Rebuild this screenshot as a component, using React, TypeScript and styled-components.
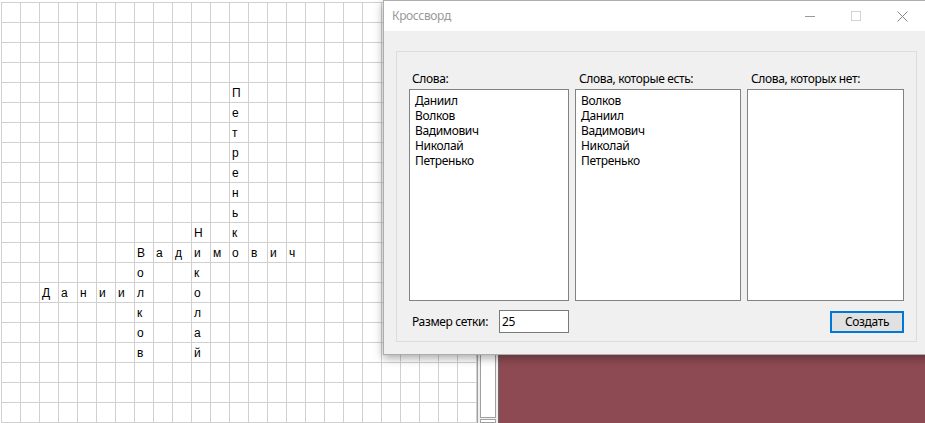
import React from "react";
import styled, { createGlobalStyle } from "styled-components";

const GlobalStyle = createGlobalStyle`
  html, body { margin: 0; padding: 0; overflow: hidden; background: #8e4a52; }
  #root { width: 925px; height: 423px; }
`;

const SIZE = 25;
type Placement = { word: string; row: number; col: number; dir: "h" | "v" };
const placements: Placement[] = [
  { word: "Петренько", row: 4, col: 12, dir: "v" },
  { word: "Николай", row: 11, col: 10, dir: "v" },
  { word: "Вадимович", row: 12, col: 7, dir: "h" },
  { word: "Волков", row: 12, col: 7, dir: "v" },
  { word: "Даниил", row: 14, col: 2, dir: "h" },
];

function buildGrid(): string[][] {
  const g: string[][] = Array.from({ length: SIZE }, () => Array(SIZE).fill(""));
  placements.forEach((p) => {
    [...p.word].forEach((ch, i) => {
      const r = p.dir === "v" ? p.row + i : p.row;
      const c = p.dir === "h" ? p.col + i : p.col;
      g[r][c] = ch;
    });
  });
  return g;
}

const allWords = ["Даниил", "Волков", "Вадимович", "Николай", "Петренько"];
const presentWords = ["Волков", "Даниил", "Вадимович", "Николай", "Петренько"];
const missingWords: string[] = [];

const Desktop = styled.div`
  position: relative;
  width: 925px;
  height: 423px;
  overflow: hidden;
  display: flex;
  background: #8e4a52;
`;

const HostApp = styled.div`
  flex: none;
  width: 499px;
  height: 100%;
  box-sizing: border-box;
  display: flex;
  gap: 2px;
  background: #f0f0f0;
  border-right: 1px solid #6b6b6b;
`;

const GridPane = styled.div`
  flex: none;
  width: 478px;
  height: 100%;
  box-sizing: border-box;
  background: #ffffff;
  border-right: 1px solid #a0a0a0;
  padding: 2px 0 0 1px;
  overflow: hidden;
`;

const Grid = styled.div`
  display: grid;
  grid-template-columns: repeat(${SIZE}, 19px);
  grid-auto-rows: 20px;
  width: max-content;
  border-left: 1px solid #d0d0d0;
  border-top: 1px solid #d0d0d0;
`;

const Cell = styled.div`
  box-sizing: border-box;
  border-right: 1px solid #d0d0d0;
  border-bottom: 1px solid #d0d0d0;
  padding: 1px 0 0 2px;
  font-family: "Liberation Sans", Arial, sans-serif;
  font-size: 12px;
  line-height: 18px;
  color: #000;
`;

const ScrollColumn = styled.div`
  flex: none;
  width: 16px;
  display: flex;
  flex-direction: column;
  gap: 1px;
`;

const ScrollPiece = styled.div<{ $h?: number }>`
  box-sizing: border-box;
  height: ${(p) => (p.$h ? `${p.$h}px` : "auto")};
  flex: ${(p) => (p.$h ? "none" : "1")};
  background: #ffffff;
  border: 1px solid #a0a0a0;
`;

const Window = styled.div`
  position: absolute;
  left: 383px;
  top: 0;
  width: 547px;
  height: 355px;
  box-sizing: border-box;
  border: 1px solid rgba(0, 0, 0, 0.28);
  background: #f0f0f0;
  box-shadow: 0 3px 9px rgba(0, 0, 0, 0.35);
  display: flex;
  flex-direction: column;
  font-family: "Segoe UI", "Noto Sans", "Open Sans", sans-serif;
  font-size: 12px;
  letter-spacing: -0.35px;
  color: #000;
`;

const TitleBar = styled.div`
  flex: none;
  height: 30px;
  background: #ffffff;
  display: flex;
  align-items: center;
  padding: 0 4px 0 8px;
`;

const Title = styled.div`
  flex: 1;
  color: #999999;
  font-size: 12px;
  line-height: 16px;
`;

const CaptionButton = styled.div`
  width: 46px;
  height: 30px;
  display: flex;
  align-items: center;
  justify-content: center;
`;

const Client = styled.div`
  flex: 1;
  padding: 20px 12px 13px 12px;
`;

const GroupBox = styled.div`
  width: 521px;
  height: 291px;
  box-sizing: border-box;
  border: 1px solid #dcdcdc;
  padding: 19px 12px 0 12px;
  display: flex;
  flex-direction: column;
`;

const Columns = styled.div`
  display: grid;
  grid-template-columns: 160px 166px 157px;
  column-gap: 6px;
`;

const Column = styled.div`
  display: flex;
  flex-direction: column;
`;

const Label = styled.div<{ $indent?: number }>`
  height: 16px;
  line-height: 16px;
  margin-bottom: 2px;
  padding-left: ${(p) => p.$indent ?? 3}px;
  white-space: nowrap;
`;

const ListBox = styled.div`
  height: 212px;
  box-sizing: border-box;
  border: 1px solid #828282;
  background: #ffffff;
  padding: 3px 0 0 5px;
`;

const ListItem = styled.div`
  height: 15px;
  line-height: 15px;
  white-space: nowrap;
`;

const BottomRow = styled.div`
  margin-top: 9px;
  height: 23px;
  display: flex;
  align-items: center;
`;

const FieldLabel = styled.div`
  width: 90px;
  box-sizing: border-box;
  padding-left: 3px;
  white-space: nowrap;
`;

const TextBox = styled.div`
  width: 70px;
  height: 23px;
  box-sizing: border-box;
  border: 1px solid #7a7a7a;
  background: #ffffff;
  padding-left: 2px;
  line-height: 21px;
`;

const Spacer = styled.div`
  flex: 1;
`;

const Button = styled.div`
  width: 74px;
  height: 22px;
  box-sizing: border-box;
  border: 2px solid #0078d7;
  background: #e1e1e1;
  display: flex;
  align-items: center;
  justify-content: center;
  line-height: 16px;
`;

export default function App() {
  const grid = buildGrid();
  return (
    <>
      <GlobalStyle />
      <Desktop>
        <HostApp>
          <GridPane>
            <Grid>
              {grid.map((row, r) =>
                row.map((ch, c) => <Cell key={`${r}-${c}`}>{ch}</Cell>)
              )}
            </Grid>
          </GridPane>
          <ScrollColumn>
            <ScrollPiece $h={418} />
            <ScrollPiece />
          </ScrollColumn>
        </HostApp>

        <Window>
          <TitleBar>
            <Title>Кроссворд</Title>
            <CaptionButton>
              <svg width="10" height="10" viewBox="0 0 10 10">
                <line x1="0" y1="5.5" x2="10" y2="5.5" stroke="#999" strokeWidth="1" />
              </svg>
            </CaptionButton>
            <CaptionButton>
              <svg width="10" height="10" viewBox="0 0 10 10">
                <rect x="0.5" y="0.5" width="9" height="9" fill="none" stroke="#d4d4d4" strokeWidth="1" />
              </svg>
            </CaptionButton>
            <CaptionButton>
              <svg width="11" height="11" viewBox="0 0 11 11">
                <path d="M0.5 0.5 L10.5 10.5 M10.5 0.5 L0.5 10.5" stroke="#888" strokeWidth="1" fill="none" />
              </svg>
            </CaptionButton>
          </TitleBar>
          <Client>
            <GroupBox>
              <Columns>
                <Column>
                  <Label>Слова:</Label>
                  <ListBox>
                    {allWords.map((w) => (
                      <ListItem key={w}>{w}</ListItem>
                    ))}
                  </ListBox>
                </Column>
                <Column>
                  <Label $indent={4}>Слова, которые есть:</Label>
                  <ListBox>
                    {presentWords.map((w) => (
                      <ListItem key={w}>{w}</ListItem>
                    ))}
                  </ListBox>
                </Column>
                <Column>
                  <Label $indent={4}>Слова, которых нет:</Label>
                  <ListBox>
                    {missingWords.map((w) => (
                      <ListItem key={w}>{w}</ListItem>
                    ))}
                  </ListBox>
                </Column>
              </Columns>
              <BottomRow>
                <FieldLabel>Размер сетки:</FieldLabel>
                <TextBox>25</TextBox>
                <Spacer />
                <Button>Создать</Button>
              </BottomRow>
            </GroupBox>
          </Client>
        </Window>
      </Desktop>
    </>
  );
}
